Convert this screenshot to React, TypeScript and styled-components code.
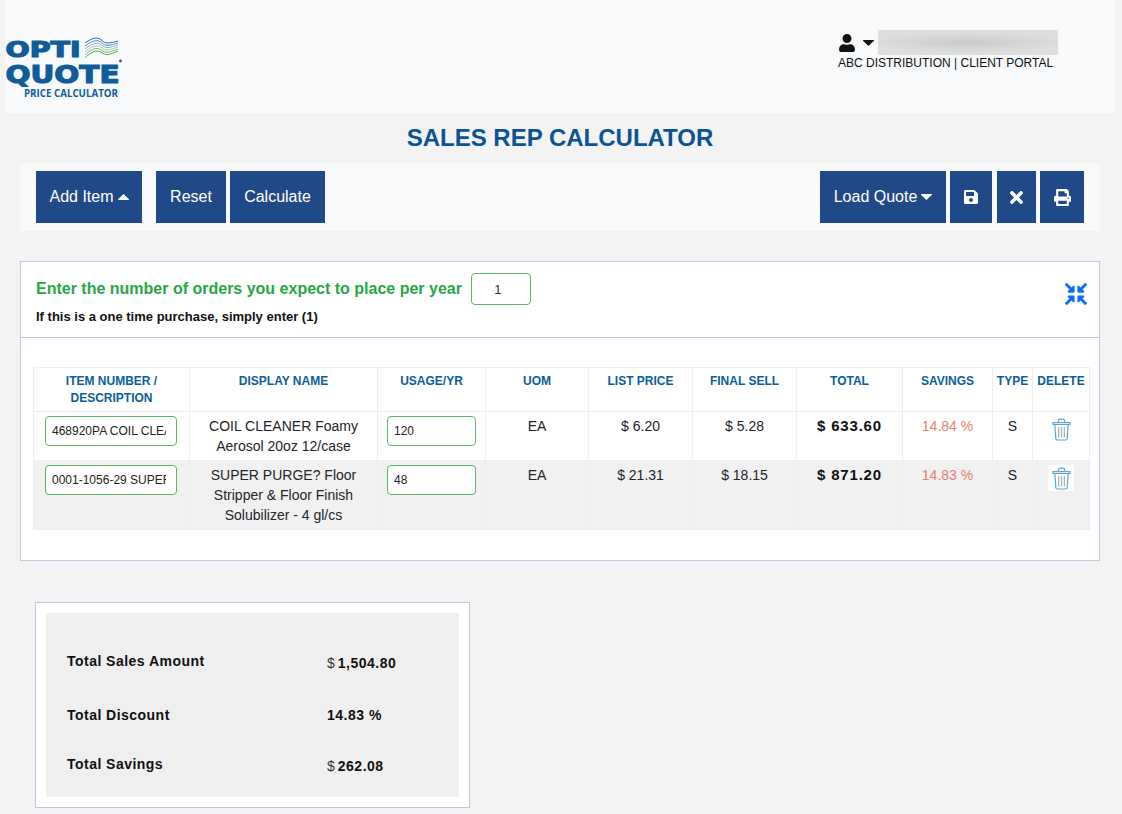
import React from "react";
import styled, { createGlobalStyle } from "styled-components";
import { FaUser, FaSave, FaTimes, FaPrint, FaCompressArrowsAlt } from "react-icons/fa";

const Global = createGlobalStyle`
  html, body { margin: 0; padding: 0; background: #f3f3f3; }
  body { font-family: "Liberation Sans", Arial, sans-serif; color: #212529; }
  * { box-sizing: border-box; }
`;

const Page = styled.div`
  width: 1122px;
  height: 814px;
  overflow: hidden;
`;

const Header = styled.header`
  margin: 0 7px 0 5px;
  height: 113px;
  background: #f8f9fa;
  display: flex;
  justify-content: space-between;
`;

const LogoWrap = styled.div`
  padding-top: 35px;
  svg { display: block; }
`;

const UserBlock = styled.div`
  width: 277px;
  padding-top: 30px;
  color: #111;
`;

const UserRow = styled.div`
  display: flex;
  align-items: center;
  height: 25px;
  font-size: 18px;
`;

const UserCaret = styled.span`
  display: flex;
  width: 14px;
  margin: 0 1px 0 7px;
  padding-top: 1px;
`;

const BlurName = styled.div`
  width: 180px;
  height: 25px;
  background: radial-gradient(ellipse 55% 40% at 50% 50%, #c9c9c9, #d8d8d8 70%, #dedede);
`;

const PortalLine = styled.div`
  margin-top: 1px;
  font-size: 12px;
  line-height: 15px;
`;

const Title = styled.h1`
  margin: 0;
  height: 50px;
  padding-right: 2px;
  font-size: 24px;
  line-height: 49px;
  font-weight: 700;
  text-align: center;
  color: #0b5394;
`;

const Toolbar = styled.div`
  margin: 0 22px 0 20px;
  height: 68px;
  padding: 8px 16px;
  background: #f8f9fa;
  display: flex;
  justify-content: space-between;
`;

const ToolGroup = styled.div`
  display: flex;
`;

const ToolButton = styled.button<{ $w: number; $after?: number }>`
  width: ${(p) => p.$w}px;
  height: 52px;
  margin-right: ${(p) => p.$after ?? 0}px;
  border: 0;
  padding: 0;
  background: #1f4a87;
  color: #fff;
  font: 400 16px "Liberation Sans", Arial, sans-serif;
  display: flex;
  align-items: center;
  justify-content: center;
  gap: 4px;
  svg { display: block; }
`;

const Panel = styled.section`
  margin: 30px 22px 0 20px;
  height: 300px;
  background: #fff;
  border: 1px solid #c5c3e5;
`;

const PanelHead = styled.div`
  height: 76px;
  padding: 11px 12px 0 15px;
  border-bottom: 1px solid #c5c3e5;
  display: flex;
  justify-content: space-between;
`;

const OrdersRow = styled.div`
  display: flex;
  align-items: center;
  height: 32px;
  gap: 9px;
`;

const OrdersLabel = styled.span`
  font-size: 16px;
  font-weight: 700;
  color: #28a745;
`;

const OrdersInput = styled.input`
  width: 60px;
  height: 32px;
  border: 1px solid #5cb85c;
  border-radius: 4px;
  background: #fff;
  text-align: center;
  color: #333;
  padding: 0 6px 0 0;
  font: 400 13px "Liberation Sans", Arial, sans-serif;
  outline: none;
`;

const OrdersHint = styled.div`
  margin-top: 4px;
  font-size: 13px;
  line-height: 16px;
  font-weight: 700;
  color: #111;
`;

const CollapseIcon = styled.div`
  margin-top: 10px;
  color: #0d6efd;
  font-size: 22px;
  height: 22px;
  svg { display: block; }
`;

const TableWrap = styled.div`
  padding: 29px 10px 0 12px;
`;

const Table = styled.table`
  width: 1056px;
  table-layout: fixed;
  border-collapse: collapse;
  background: #fff;
`;

const Th = styled.th<{ $w: number }>`
  width: ${(p) => p.$w}px;
  height: 44px;
  padding: 5px 2px 0;
  vertical-align: top;
  border: 1px solid #eee;
  font-size: 12px;
  line-height: 17px;
  font-weight: 700;
  color: #0b5e99;
  text-align: center;
`;

const Row = styled.tr<{ $alt?: boolean; $h: number }>`
  height: ${(p) => p.$h}px;
  background: ${(p) => (p.$alt ? "#f1f1f1" : "#fff")};
`;

const Td = styled.td`
  padding: 4px 8px 0;
  vertical-align: top;
  border: 1px solid #eee;
  font-size: 14px;
  line-height: 20px;
  text-align: center;
  color: #212529;
`;

const InputCell = styled(Td)<{ $l: number; $r: number }>`
  padding: 4px ${(p) => p.$r}px 0 ${(p) => p.$l}px;
`;

const GreenInput = styled.input`
  display: block;
  width: 100%;
  height: 30px;
  border: 1px solid #5cb85c;
  border-radius: 4px;
  background: #fff;
  padding: 0 10px 0 6px;
  font: 400 12px "Liberation Sans", Arial, sans-serif;
  color: #222;
  outline: none;
`;

const TotalCell = styled(Td)`
  font-weight: 700;
  color: #111;
  font-size: 15px;
  letter-spacing: 0.8px;
  padding-left: 0;
  padding-right: 0;
`;

const SavingsCell = styled(Td)`
  color: #e8806f;
`;

const TrashBox = styled.span<{ $white?: boolean }>`
  display: inline-flex;
  width: 26px;
  height: 26px;
  align-items: center;
  justify-content: center;
  background: ${(p) => (p.$white ? "#fff" : "transparent")};
`;

const DeleteCell = styled(Td)`
  padding: 4px 0 0;
`;

const Summary = styled.section`
  margin: 41px 0 0 35px;
  width: 435px;
  height: 206px;
  background: #fff;
  border: 1px solid #c5c3e5;
  padding: 10px;
`;

const SummaryInner = styled.div`
  height: 184px;
  background: #efefef;
  padding: 39px 0 0 21px;
`;

const SummaryRow = styled.div<{ $h: number }>`
  display: grid;
  grid-template-columns: 260px 1fr;
  height: ${(p) => p.$h}px;
  font-size: 14px;
  line-height: 18px;
  font-weight: 700;
  color: #111;
`;

const SummaryLabel = styled.span`
  letter-spacing: 0.47px;
`;

const SummaryValue = styled.span<{ $drop?: boolean }>`
  margin-top: ${(p) => (p.$drop ? 2 : 0)}px;
  letter-spacing: 0.5px;
`;

const Dollar = styled.span`
  font-weight: 400;
  margin-right: 3px;
  letter-spacing: 0;
  color: #333;
`;

function Caret({ up }: { up?: boolean }) {
  return (
    <svg width="11" height="6" viewBox="0 0 11 6" fill="currentColor">
      <path d={up ? "M5.5 0L11 5.2c.2.4 0 .8-.5.8H.5C0 6-.2 5.6 0 5.2z" : "M5.5 6L11 .8c.2-.4 0-.8-.5-.8H.5C0 0-.2.4 0 .8z"} />
    </svg>
  );
}

const waveColors = ["#2f6fa8", "#5b8fc0", "#8fb4d6", "#a9cfa0", "#7dbb6a", "#5aa84a"];

function Logo() {
  const blue = "#0f5c99";
  return (
    <svg width="120" height="66" viewBox="0 0 120 66" aria-label="OptiQuote Price Calculator">
      <g fill={blue} stroke={blue} strokeWidth="1.2" fontFamily="'DejaVu Sans', sans-serif" fontWeight="700">
        <text x="0.5" y="21.5" fontSize="20.5" textLength="75" lengthAdjust="spacingAndGlyphs">OPTI</text>
        <text x="0.5" y="47.5" fontSize="24" textLength="114" lengthAdjust="spacingAndGlyphs">QUOTE</text>
      </g>
      <text x="19" y="62" fontSize="10.5" fill={blue} fontWeight="700" fontFamily="'Open Sans', sans-serif" textLength="94" lengthAdjust="spacingAndGlyphs">PRICE CALCULATOR</text>
      <g fill="none" strokeWidth="1">
        {waveColors.map((c, i) => {
          const d = i * 2.9;
          return <path key={c} stroke={c} d={`M80 ${8 + d}C84 ${5 + d} 88 ${3 + d * 0.9} 92 ${3 + d * 0.9}S98 ${8 + d * 0.8} 102 ${8 + d * 0.8}S109 ${7 + d * 0.7} 113 ${6 + d * 0.7}`} />;
        })}
      </g>
      <circle cx="115.5" cy="26" r="1.4" fill="#555" />
    </svg>
  );
}

function Trash() {
  return (
    <svg width="19" height="23" viewBox="0 0 19 23" fill="none" stroke="#5ea5da" strokeWidth="1.2">
      <path d="M1 4.5h17v1.8H1z" />
      <path d="M6.5 4.5V2.4c0-.8.6-1.3 1.3-1.3h3.4c.7 0 1.3.5 1.3 1.3v2.1" />
      <path d="M2.8 6.3l1 14.4c.1.8.6 1.3 1.4 1.3h8.6c.8 0 1.3-.5 1.4-1.3l1-14.4" />
      <path d="M6.7 9v10.5M9.5 9v10.5M12.3 9v10.5" stroke="#a9afb5" strokeWidth="1.2" />
    </svg>
  );
}

const cols = [156, 188, 108, 103, 104, 104, 106, 90, 40, 57];
const heads = ["ITEM NUMBER / DESCRIPTION", "DISPLAY NAME", "USAGE/YR", "UOM", "LIST PRICE", "FINAL SELL", "TOTAL", "SAVINGS", "TYPE", "DELETE"];

const items = [
  { h: 49, item: "468920PA COIL CLEANER Foamy Aerosol", name: "COIL CLEANER Foamy Aerosol 20oz 12/case", usage: "120", list: "$ 6.20", sell: "$ 5.28", total: "$ 633.60", sav: "14.84 %" },
  { h: 69, item: "0001-1056-29 SUPER PURGE? Floor Stripper", name: "SUPER PURGE? Floor Stripper & Floor Finish Solubilizer - 4 gl/cs", usage: "48", list: "$ 21.31", sell: "$ 18.15", total: "$ 871.20", sav: "14.83 %" },
];

export default function App() {
  return (
    <Page>
      <Global />
      <Header>
        <LogoWrap><Logo /></LogoWrap>
        <UserBlock>
          <UserRow>
            <FaUser />
            <UserCaret><Caret /></UserCaret>
            <BlurName />
          </UserRow>
          <PortalLine>ABC DISTRIBUTION | CLIENT PORTAL</PortalLine>
        </UserBlock>
      </Header>
      <Title>SALES REP CALCULATOR</Title>
      <Toolbar>
        <ToolGroup>
          <ToolButton $w={106} $after={14}>Add Item <Caret up /></ToolButton>
          <ToolButton $w={70} $after={4}>Reset</ToolButton>
          <ToolButton $w={95}>Calculate</ToolButton>
        </ToolGroup>
        <ToolGroup>
          <ToolButton $w={126} $after={4}>Load Quote <Caret /></ToolButton>
          <ToolButton $w={42} $after={5} aria-label="Save"><FaSave size={16} /></ToolButton>
          <ToolButton $w={39} $after={4} aria-label="Clear"><FaTimes size={19} /></ToolButton>
          <ToolButton $w={44} aria-label="Print"><FaPrint size={17} /></ToolButton>
        </ToolGroup>
      </Toolbar>
      <Panel>
        <PanelHead>
          <div>
            <OrdersRow>
              <OrdersLabel>Enter the number of orders you expect to place per year</OrdersLabel>
              <OrdersInput defaultValue="1" />
            </OrdersRow>
            <OrdersHint>If this is a one time purchase, simply enter (1)</OrdersHint>
          </div>
          <CollapseIcon><FaCompressArrowsAlt /></CollapseIcon>
        </PanelHead>
        <TableWrap>
          <Table>
            <thead>
              <tr>
                {heads.map((h, i) => <Th key={h} $w={cols[i]}>{h}</Th>)}
              </tr>
            </thead>
            <tbody>
              {items.map((it, i) => (
                <Row key={it.item} $alt={i === 1} $h={it.h}>
                  <InputCell $l={11} $r={12}><GreenInput defaultValue={it.item} /></InputCell>
                  <Td>{it.name}</Td>
                  <InputCell $l={9} $r={9}><GreenInput defaultValue={it.usage} /></InputCell>
                  <Td>EA</Td>
                  <Td>{it.list}</Td>
                  <Td>{it.sell}</Td>
                  <TotalCell>{it.total}</TotalCell>
                  <SavingsCell>{it.sav}</SavingsCell>
                  <Td>S</Td>
                  <DeleteCell><TrashBox $white={i === 1}><Trash /></TrashBox></DeleteCell>
                </Row>
              ))}
            </tbody>
          </Table>
        </TableWrap>
      </Panel>
      <Summary>
        <SummaryInner>
          <SummaryRow $h={54}>
            <SummaryLabel>Total Sales Amount</SummaryLabel>
            <SummaryValue $drop><Dollar>$</Dollar>1,504.80</SummaryValue>
          </SummaryRow>
          <SummaryRow $h={49}>
            <SummaryLabel>Total Discount</SummaryLabel>
            <SummaryValue>14.83 %</SummaryValue>
          </SummaryRow>
          <SummaryRow $h={30}>
            <SummaryLabel>Total Savings</SummaryLabel>
            <SummaryValue $drop><Dollar>$</Dollar>262.08</SummaryValue>
          </SummaryRow>
        </SummaryInner>
      </Summary>
    </Page>
  );
}
